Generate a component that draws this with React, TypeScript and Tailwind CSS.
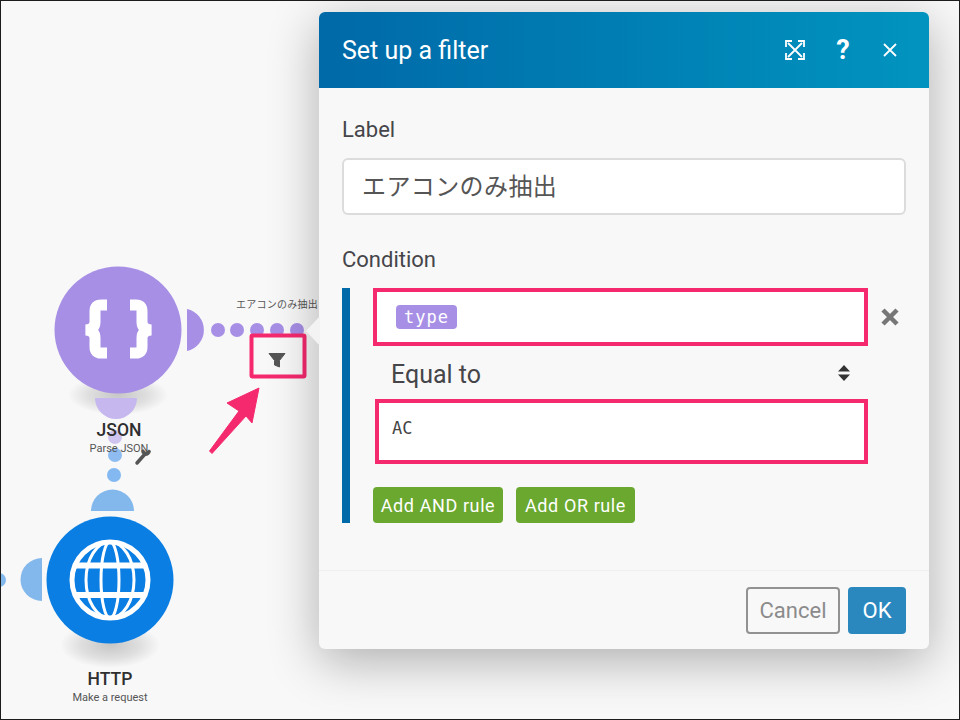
export default function App() {
  return (
    <div className="relative flex h-[720px] w-[960px] justify-end overflow-hidden border border-[#1c1c1c] bg-[#f8f8f8] pr-[30px] pt-[11px] font-['Roboto','Noto_Sans_CJK_JP',sans-serif] text-[#45454a]">
      <Canvas />
      <Dialog />
    </div>
  );
}

function Canvas() {
  return (
    <>
      {/* scenario canvas: nodes sit at free positions */}
      <svg className="absolute left-[-1px] top-[-1px]" width="320" height="720" viewBox="0 0 320 720" fill="none">
        <defs>
          <radialGradient id="nodeShadow">
            <stop offset="0" stopColor="#000" stopOpacity="0.2" />
            <stop offset="0.6" stopColor="#000" stopOpacity="0.1" />
            <stop offset="1" stopColor="#000" stopOpacity="0" />
          </radialGradient>
        </defs>
        <ellipse cx="118" cy="395" rx="50" ry="20" fill="url(#nodeShadow)" />
        <ellipse cx="110" cy="645" rx="50" ry="23" fill="url(#nodeShadow)" />

        {/* JSON node */}
        <circle cx="118" cy="330" r="63.5" fill="#a78fe6" />
        <path d="M187 309A21.5 21.5 0 0 1 187 351Z" fill="#a78fe6" />
        {[218, 237, 257, 277, 297].map((x) => (
          <circle key={x} cx={x} cy="330" r="7" fill="#a78fe6" />
        ))}
        <path d="M95 398H137A21 21 0 0 1 95 398Z" fill="#c6b8ee" />
        <circle cx="115" cy="437" r="7" fill="#cfc4f0" />
        <g stroke="#fff" strokeWidth="11">
          <path d="M107 305H101Q95 305 95 311V322Q95 329 86 330Q95 331 95 338V347Q95 353 101 353H107" />
          <path d="M130 305H136Q142 305 142 311V322Q142 329 151 330Q142 331 142 338V347Q142 353 136 353H130" />
        </g>

        {/* link to HTTP */}
        <circle cx="115" cy="455" r="7" fill="#8ebcf0" />
        <circle cx="114" cy="475" r="7" fill="#83b8f0" />
        <path d="M91 511A21.5 21.5 0 0 1 134 511Z" fill="#83b8ec" />
        <path d="M42 558A21.5 21.5 0 0 0 42 601Z" fill="#83b8ec" />
        <circle cx="-1" cy="580" r="7" fill="#83b8ec" />

        {/* HTTP node */}
        <circle cx="110" cy="580" r="63.5" fill="#0a7ee3" />
        <g stroke="#fff">
          <circle cx="110" cy="580" r="38" strokeWidth="5" />
          <path d="M75 565.500H145M75 595H145" strokeWidth="6" />
          <ellipse cx="110" cy="580" rx="9" ry="38" strokeWidth="3" />
          <ellipse cx="110" cy="580" rx="24" ry="38" strokeWidth="3" />
        </g>

        {/* wrench */}
        <path d="M137 463L145 454" stroke="#555" strokeWidth="3.5" strokeLinecap="round" />
        <path d="M143 449L146 452L149 449.5L151 451Q150 456 145 456L141.500 453Q141 450 143 449Z" fill="#555" />

        {/* red frame and arrow */}
        <path d="M269 353.500H285L279.500 360.500V367L274.500 365V360.500Z" fill="#555" stroke="#555" strokeWidth="1" strokeLinejoin="round" />
        <rect x="251.500" y="335.500" width="53" height="41" rx="1" stroke="#f5296e" strokeWidth="4" />
        <path d="M259 388L227 403L239 411L209.500 451L212 453.500L246 416L252 423Z" fill="#f5296e" stroke="#f5296e" strokeWidth="1" strokeLinejoin="round" />
      </svg>

      <span className="absolute left-[235px] top-[297px] text-[10px] leading-[14px] tracking-[0.25px] text-[#555]">エアコンのみ抽出</span>
      <NodeLabel title="JSON" subtitle="Parse JSON" left={58} top={419} />
      <NodeLabel title="HTTP" subtitle="Make a request" left={49} top={668} />
    </>
  );
}

function NodeLabel({ title, subtitle, left, top }: { title: string; subtitle: string; left: number; top: number }) {
  return (
    <div className="absolute flex w-[120px] flex-col items-center" style={{ left, top }}>
      <span className="text-[17.500px] font-medium leading-[20px] text-[#2f2f2f]">{title}</span>
      <span className="text-[11px] leading-[18px] text-[#555]">{subtitle}</span>
    </div>
  );
}

function Dialog() {
  return (
    <div className="relative flex h-[637px] w-[610px] flex-col rounded-[6px] bg-[#f8f8f8] shadow-[0_12px_50px_rgba(0,0,0,0.3)]">
      {/* pointer toward the filter */}
      <div className="absolute left-[-13px] top-[304px] h-0 w-0 border-y-[15px] border-r-[14px] border-y-transparent border-r-[#f3f3f3]" />

      <div className="flex h-[76px] items-center justify-between rounded-t-[6px] bg-gradient-to-r from-[#0069a8] to-[#0294bf] pl-[23px] pr-[31px] text-white">
        <h1 className="text-[25px] font-normal leading-none">Set up a filter</h1>
        <div className="flex items-center">
          <svg width="20" height="20" viewBox="0 0 20 20" fill="none" stroke="#fff" strokeWidth="1.8">
            <path d="M3 3L17 17M17 3L3 17" />
            <path d="M1 7V1H7M13 1H19V7M19 13V19H13M7 19H1V13" />
          </svg>
          <span className="ml-[28px] w-[20px] text-center text-[27px] font-bold leading-none">?</span>
          <svg className="ml-[29px]" width="16" height="16" viewBox="0 0 16 16" fill="none" stroke="#fff" strokeWidth="1.8">
            <path d="M2 2L14 14M14 2L2 14" />
          </svg>
        </div>
      </div>

      <div className="flex flex-1 flex-col px-[23px] pt-[30px]">
        <label className="text-[22px] leading-[24px]">Label</label>
        <div className="mt-[16px] flex h-[57px] items-center rounded-[6px] border-2 border-[#dcdcdc] bg-white pl-[18px] text-[24px] tracking-[0.4px] text-[#555]">
          エアコンのみ抽出
        </div>

        <label className="mt-[33px] text-[22px] leading-[24px]">Condition</label>
        <div className="mt-[16px] flex h-[235px]">
          <div className="w-[8px] bg-[#0069a8]" />
          <div className="ml-[23px] flex flex-col">
            <div className="flex items-center">
              <div className="flex h-[58px] w-[495px] items-center border-[4px] border-[#f5296e] bg-white pl-[19px]">
                <span className="rounded-[4px] bg-[#a78fe6] px-[8px] font-['DejaVu_Sans_Mono',monospace] text-[17px] leading-[24px] tracking-[1px] text-white">
                  type
                </span>
              </div>
              <svg className="ml-[13px]" width="18" height="18" viewBox="0 0 18 18" fill="none" stroke="#777" strokeWidth="4.500">
                <path d="M2 2L16 16M16 2L2 16" />
              </svg>
            </div>
            <div className="flex h-[53px] w-[495px] items-center justify-between px-[18px]">
              <span className="pt-[3px] text-[25px] leading-none">Equal to</span>
              <svg width="12" height="18" viewBox="0 0 12 18" fill="#333">
                <path d="M6 1L12 7.500H0ZM6 17L0 10.500H12Z" />
              </svg>
            </div>
            <div className="ml-[2px] flex h-[65px] w-[493px] border-[4px] border-[#f5296e] bg-white pl-[13px] pt-[13px] font-['DejaVu_Sans_Mono',monospace] text-[17px] leading-[24px] text-[#444]">
              AC
            </div>
            <div className="mt-[23px] flex gap-[13px]">
              <button className="h-[36px] w-[130px] rounded-[4px] bg-[#6aa82f] text-[18px] tracking-[0.6px] text-white">Add AND rule</button>
              <button className="h-[36px] w-[119px] rounded-[4px] bg-[#6aa82f] text-[18px] tracking-[0.6px] text-white">Add OR rule</button>
            </div>
          </div>
        </div>
      </div>

      <div className="flex h-[79px] justify-end gap-[8px] border-t border-[#efefef] pr-[23px] pt-[16px]">
        <button className="h-[47px] w-[94px] rounded-[4px] border-2 border-[#929292] text-[22px] text-[#8b8b8b]">Cancel</button>
        <button className="h-[47px] w-[58px] rounded-[4px] bg-[#2b88bf] text-[22px] text-white">OK</button>
      </div>
    </div>
  );
}
